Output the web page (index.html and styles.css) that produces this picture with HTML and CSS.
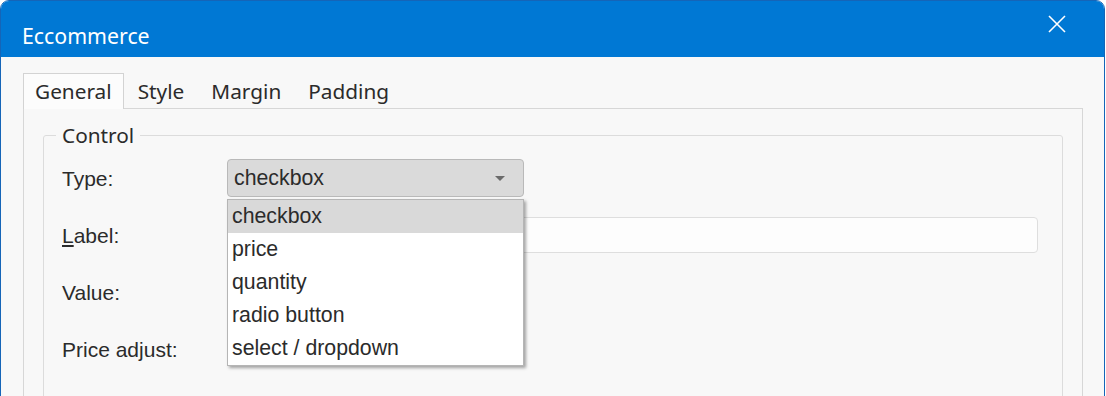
FILE: index.html
```html
<!DOCTYPE html>
<html lang="en">
<head>
    <meta charset="UTF-8">
    <meta name="viewport" content="width=device-width, initial-scale=1.0">
    <title>Eccommerce</title>
    <link rel="stylesheet" href="styles.css">
</head>
<body>
    <div class="window">
        <div class="titlebar">
            <span class="title">Eccommerce</span>
            <button class="close" aria-label="Close">
                <svg width="18" height="18" viewBox="0 0 18 18">
                    <path d="M1 1 L17 17 M17 1 L1 17" stroke="#fff" stroke-width="1.6" fill="none"/>
                </svg>
            </button>
        </div>

        <div class="content">
            <div class="tabs">
                <div class="tab active">General</div>
                <div class="tab">Style</div>
                <div class="tab">Margin</div>
                <div class="tab">Padding</div>
            </div>

            <div class="panel">
                <fieldset class="group">
                    <legend>Control</legend>
                    <div class="form">
                        <label>Type:</label>
                        <div class="combo">
                            <div class="select">
                                <span>checkbox</span>
                                <span class="arrow"></span>
                            </div>
                            <ul class="options">
                                <li class="selected">checkbox</li>
                                <li>price</li>
                                <li>quantity</li>
                                <li>radio button</li>
                                <li>select / dropdown</li>
                            </ul>
                        </div>

                        <label><u>L</u>abel:</label>
                        <input type="text" class="field">

                        <label>Value:</label>
                        <div></div>

                        <label>Price adjust:</label>
                        <div></div>
                    </div>
                </fieldset>
            </div>
        </div>
    </div>
</body>
</html>
```

FILE: styles.css
```css
body {
    margin: 0;
    background-color: #fff;
    font-family: "Liberation Sans", Arial, sans-serif;
    color: #2b2b2b;
    overflow: hidden;
}
.window {
    width: 1103px;
    height: 420px;
    border: 1px solid #1565b8;
    border-radius: 9px 9px 0 0;
    background-color: #f8f8f8;
    overflow: hidden;
}
.titlebar {
    height: 56px;
    background-color: #0078d4;
    display: flex;
    justify-content: space-between;
    padding: 0 0 0 21px;
    box-sizing: border-box;
}
.title {
    font-family: "Noto Sans", sans-serif;
    font-size: 21.3px;
    color: #fff;
    margin-top: 20px;
}
.close {
    background: none;
    border: none;
    padding: 0;
    width: 18px;
    height: 18px;
    margin: 14px 38px 0 0;
}
.content {
    padding: 16px 21px 0 22px;
}
.tabs {
    display: flex;
    font-family: "Noto Sans", sans-serif;
    font-size: 20.8px;
}
.tab {
    height: 34px;
    padding: 0 12px 0 13px;
    line-height: 34px;
    border: 1px solid transparent;
    border-bottom: none;
}
.tab.active {
    background-color: #fcfcfc;
    border-color: #d3d3d3;
    padding: 0 11px;
    margin-bottom: -1px;
    position: relative;
    height: 35px;
}
.panel {
    border: 1px solid #d7d7d7;
    padding: 13px 19px 40px;
    height: 300px;
}
.group {
    margin: 0;
    border: 1px solid #dcdcdc;
    border-radius: 3px;
    padding: 11px 18px 30px;
}
.group legend {
    font-family: "Noto Sans", sans-serif;
    font-size: 20.8px;
    line-height: 26px;
    padding: 0 6px;
    margin-left: -6px;
}
.form {
    display: grid;
    grid-template-columns: 165px 1fr;
    grid-template-rows: 38px 36px 37px 38px;
    row-gap: 20px;
    align-items: center;
    font-size: 21px;
    margin-right: 6px;
}
.form label {
    padding-top: 2px;
}
.combo {
    position: relative;
    width: 297px;
    height: 38px;
}
.select {
    height: 38px;
    box-sizing: border-box;
    border: 1px solid #b9b9b9;
    border-radius: 4px;
    background-color: #dadada;
    display: flex;
    align-items: center;
    justify-content: space-between;
    padding: 0 18px 0 6px;
    font-size: 21.3px;
}
.arrow {
    width: 0;
    height: 0;
    border-left: 5px solid transparent;
    border-right: 5px solid transparent;
    border-top: 5px solid #6b6b6b;
}
.options {
    position: absolute;
    top: 40px;
    left: 0;
    width: 297px;
    box-sizing: border-box;
    margin: 0;
    padding: 0;
    list-style: none;
    background-color: #fff;
    border: 1px solid #b5b5b5;
    box-shadow: 2px 2px 3px rgba(0, 0, 0, 0.35);
    z-index: 2;
    font-size: 21.3px;
}
.options li {
    height: 33px;
    line-height: 33px;
    padding-left: 4px;
}
.options li.selected {
    background-color: #d9d9d9;
}
.field {
    height: 36px;
    box-sizing: border-box;
    border: 1px solid #dedede;
    border-radius: 4px;
    background-color: #fdfdfd;
    width: 100%;
}
```
